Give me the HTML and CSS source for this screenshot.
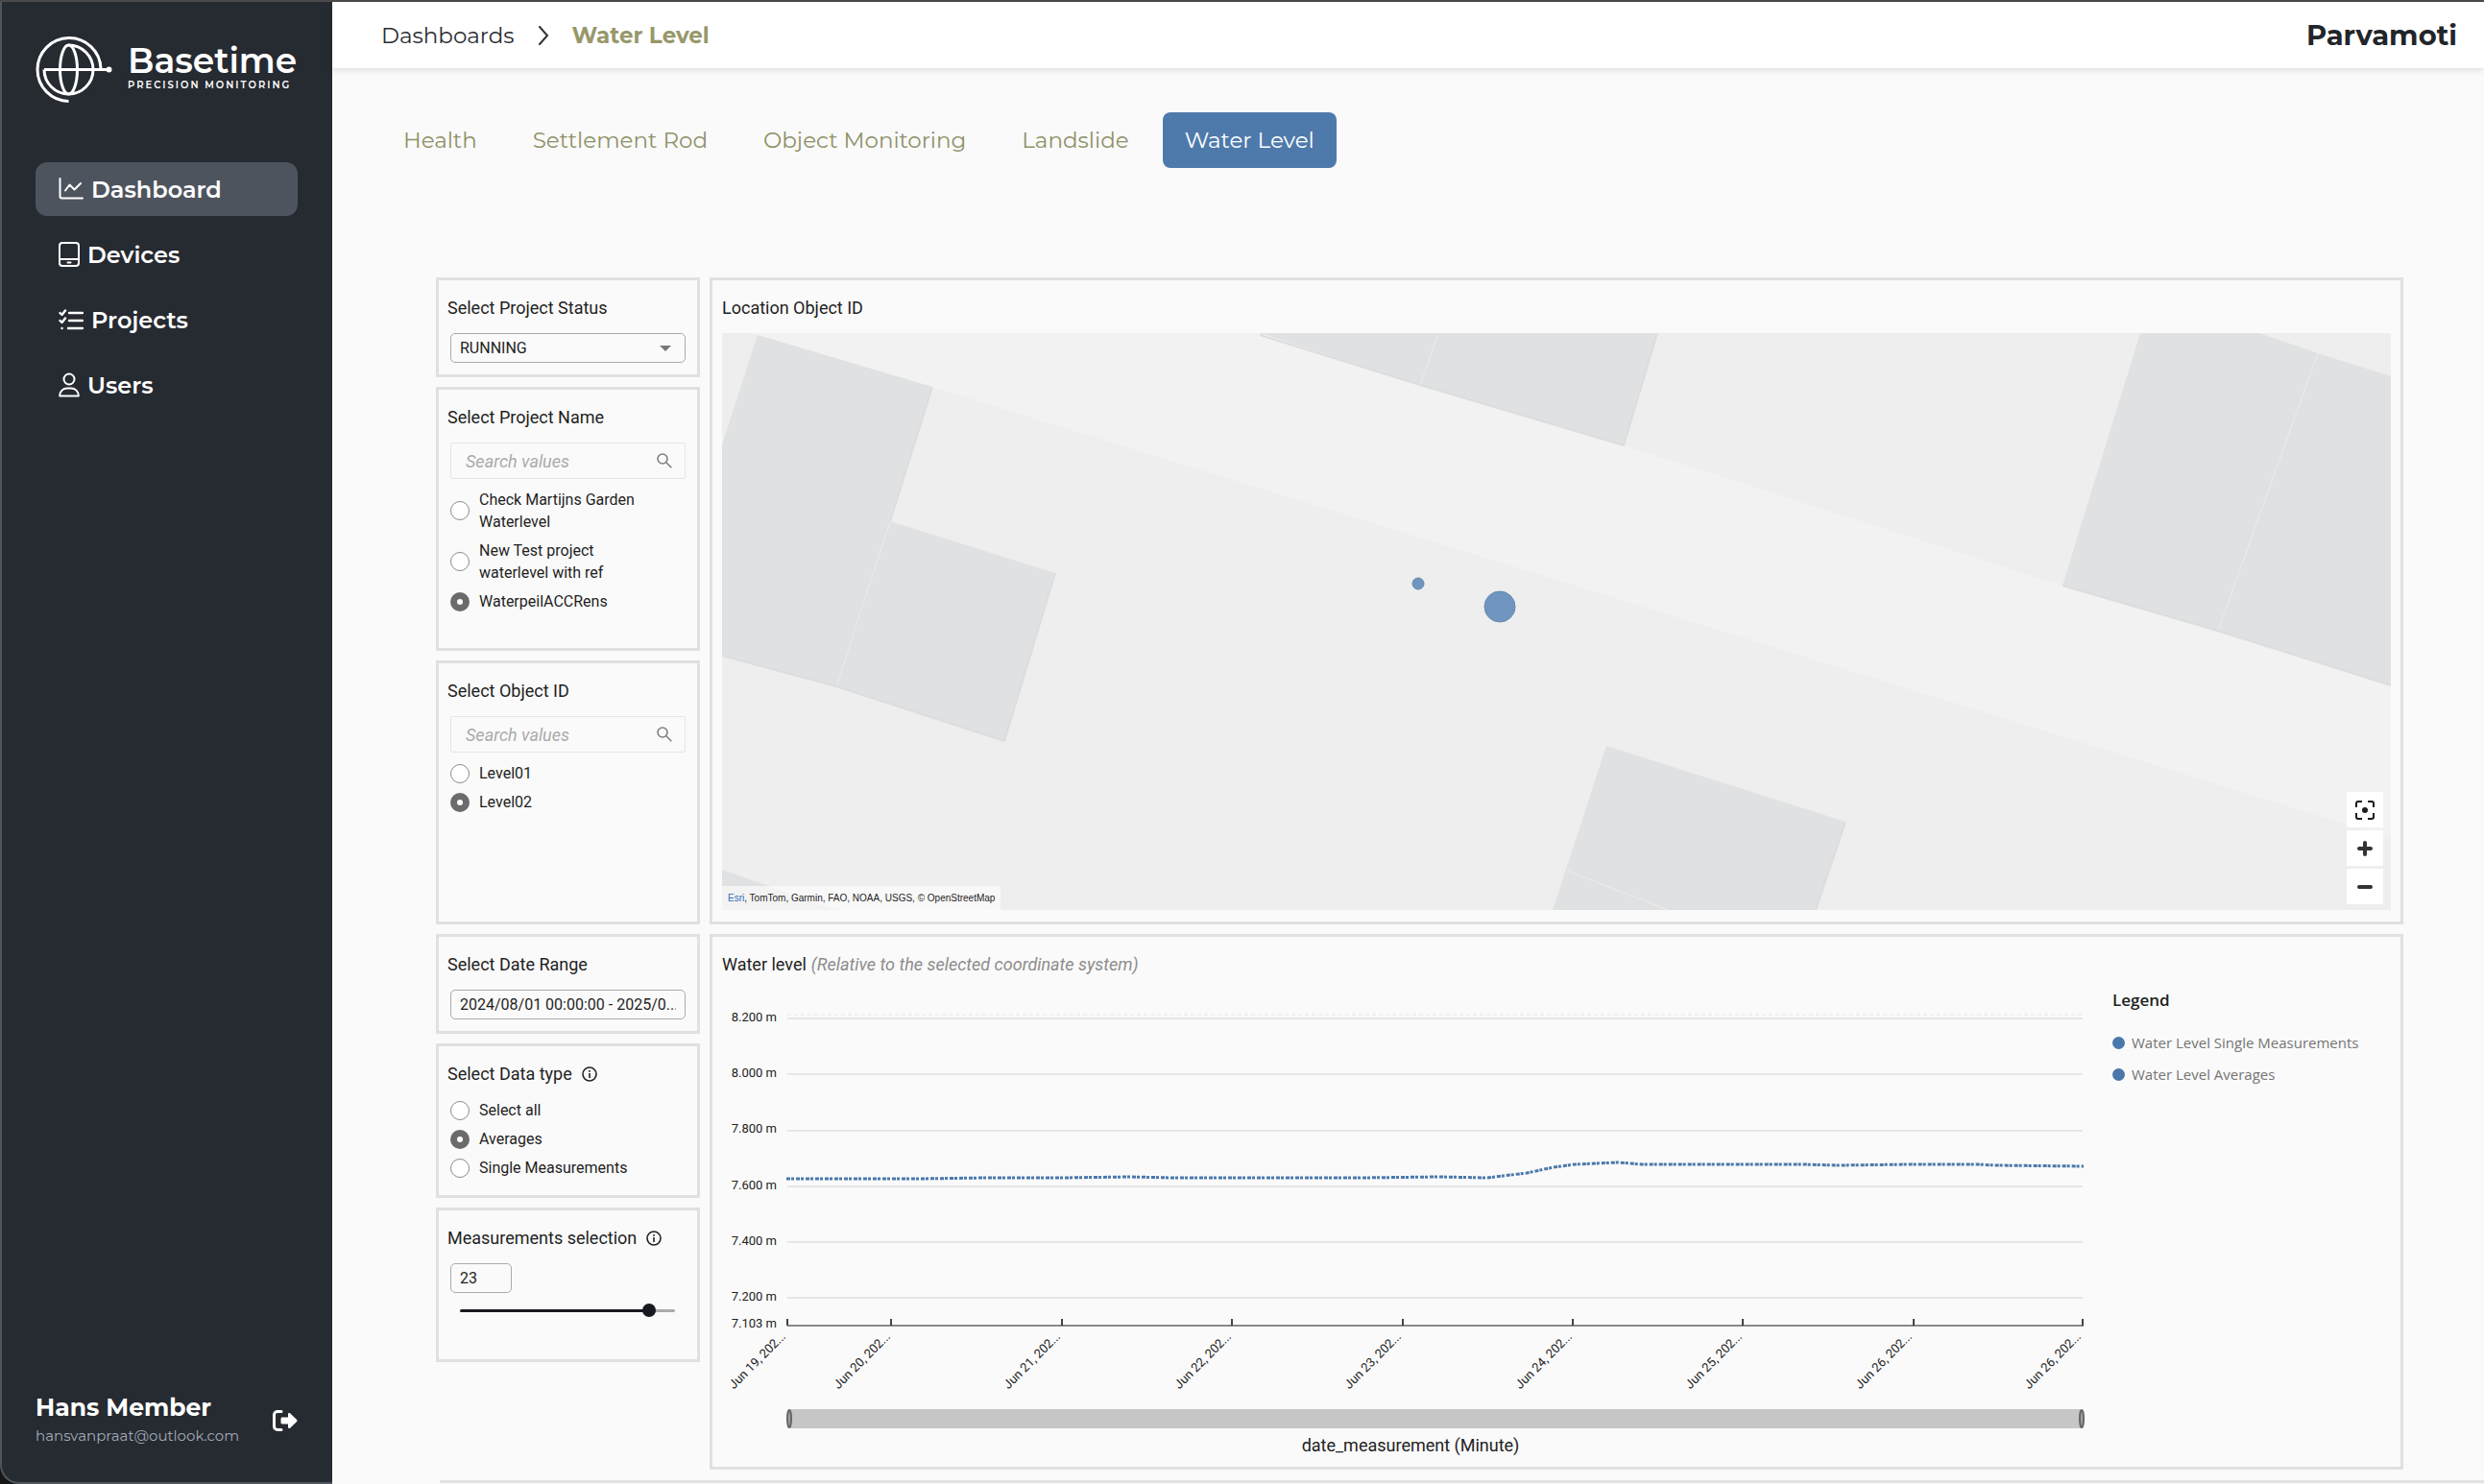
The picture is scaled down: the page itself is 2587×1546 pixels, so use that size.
FILE: index.html
```html
<!DOCTYPE html>
<html lang="en">

<head>
  <meta charset="UTF-8">
  <meta name="viewport" content="width=device-width, initial-scale=1">
  <title>Basetime - Water Level</title>
  <link rel="stylesheet" href="styles.css">
</head>

<body>
  <div class="app">
    <aside class="sidebar">
      <a class="brand" href="#">
        <svg class="brand-logo" viewBox="0 0 80 70" fill="none" stroke="#fff" stroke-width="3">
          <path d="M68 33.500A33 33 0 1 0 34.500 67.500" />
          <path d="M9 34.500H76" />
          <path d="M9 34.500A25.500 25.500 0 1 0 34.500 9" />
          <ellipse cx="34.500" cy="34.500" rx="9" ry="25.500" />
          <circle cx="76.500" cy="34.500" r="1.500" />
        </svg>
        <span class="brand-text">
          <span class="brand-name">Basetime</span>
          <span class="brand-sub">PRECISION MONITORING</span>
        </span>
      </a>

      <nav class="menu">
        <a class="menu-item active" href="#">
          <svg width="26" height="24" viewBox="0 0 26 24" fill="none" stroke="#fff" stroke-width="2" stroke-linecap="round" stroke-linejoin="round">
            <path d="M1.500 1v18.500a2 2 0 0 0 2 2H25" />
            <path d="M7 13.500l4.500-6 5 5L23 6" />
          </svg>
          Dashboard
        </a>
        <a class="menu-item" href="#">
          <svg width="22" height="26" viewBox="0 0 22 26" fill="none" stroke="#fff" stroke-width="2" stroke-linecap="round">
            <rect x="1" y="1" width="20" height="24" rx="3" />
            <path d="M1 18h20M9.500 21.500h3" />
          </svg>
          Devices
        </a>
        <a class="menu-item" href="#">
          <svg width="26" height="24" viewBox="0 0 26 24" fill="none" stroke="#fff" stroke-width="2.400" stroke-linecap="round" stroke-linejoin="round">
            <path d="M1.500 5l2 2 3.500-4.500M1.500 13l2 2 3.500-4.500" />
            <path d="M11 5h14M11 13h14M10 21h15M3.500 21h.1" />
          </svg>
          Projects
        </a>
        <a class="menu-item" href="#">
          <svg width="22" height="26" viewBox="0 0 22 26" fill="none" stroke="#fff" stroke-width="2" stroke-linejoin="round">
            <circle cx="11" cy="7" r="5.500" />
            <path d="M1.200 24.500c0-5 3.600-8 7.800-8h4c4.200 0 7.800 3 7.800 8z" />
          </svg>
          Users
        </a>
      </nav>

      <div class="account">
        <div>
          <div class="account-name">Hans Member</div>
          <div class="account-mail">hansvanpraat@outlook.com</div>
        </div>
        <button class="logout" type="button" aria-label="Log out">
          <svg width="26" height="22" viewBox="0 0 26 22">
            <path d="M9 1.500H5a3.500 3.500 0 0 0-3.500 3.500v12A3.500 3.500 0 0 0 5 20.500h4" fill="none" stroke="#fff" stroke-width="3" stroke-linecap="round" />
            <path d="M10 7.500h6V4.200c0-1.200 1.300-1.700 2.100-.9l7 6.800c.5.500.5 1.300 0 1.800l-7 6.800c-.8.800-2.100.3-2.100-.9v-3.300h-6c-.8 0-1.500-.6-1.500-1.500V9c0-.8.700-1.500 1.500-1.500z" fill="#fff" />
          </svg>
        </button>
      </div>
    </aside>

    <div class="page">
      <header class="topbar">
        <div class="crumbs">
          <a href="#">Dashboards</a>
          <svg width="12" height="20" viewBox="0 0 12 20" fill="none" stroke="#333" stroke-width="2" stroke-linecap="round">
            <path d="M2 1l8 9-8 9" />
          </svg>
          <span class="current">Water Level</span>
        </div>
        <div class="company">Parvamoti</div>
      </header>

      <main class="content">
        <nav class="tabs">
          <a class="tab" href="#">Health</a>
          <a class="tab" href="#">Settlement Rod</a>
          <a class="tab" href="#">Object Monitoring</a>
          <a class="tab" href="#">Landslide</a>
          <a class="tab active" href="#">Water Level</a>
        </nav>

        <div class="dashboard">
          <form class="filters">
            <section class="panel">
              <label class="panel-title" for="status">Select Project Status</label>
              <div class="select">
                <select class="field" id="status">
                  <option>RUNNING</option>
                </select>
              </div>
            </section>

            <section class="panel panel-list">
              <h2 class="panel-title">Select Project Name</h2>
              <div class="search">
                <input type="text" placeholder="Search values" aria-label="Search project name">
                <svg width="16" height="16" viewBox="0 0 16 16" fill="none" stroke="#808080" stroke-width="1.600">
                  <circle cx="6" cy="6" r="5" />
                  <path d="M9.800 9.800l5.500 5.500" />
                </svg>
              </div>
              <div class="options">
                <label class="option"><input type="radio" name="project"><span>Check Martijns Garden Waterlevel</span></label>
                <label class="option"><input type="radio" name="project"><span>New Test project waterlevel with ref</span></label>
                <label class="option"><input type="radio" name="project" checked><span>WaterpeilACCRens</span></label>
              </div>
            </section>

            <section class="panel panel-list">
              <h2 class="panel-title">Select Object ID</h2>
              <div class="search">
                <input type="text" placeholder="Search values" aria-label="Search object ID">
                <svg width="16" height="16" viewBox="0 0 16 16" fill="none" stroke="#808080" stroke-width="1.600">
                  <circle cx="6" cy="6" r="5" />
                  <path d="M9.800 9.800l5.500 5.500" />
                </svg>
              </div>
              <div class="options">
                <label class="option"><input type="radio" name="object"><span>Level01</span></label>
                <label class="option"><input type="radio" name="object" checked><span>Level02</span></label>
              </div>
            </section>

            <section class="panel">
              <label class="panel-title" for="range">Select Date Range</label>
              <input class="field" id="range" type="text" value="2024/08/01 00:00:00 - 2025/0...">
            </section>

            <section class="panel panel-small">
              <h2 class="panel-title">Select Data type
                <svg class="info" width="16" height="16" viewBox="0 0 16 16">
                  <circle cx="8" cy="8" r="7" fill="none" stroke="#222" stroke-width="1.600" />
                  <path d="M7.200 7h1.600v5H7.200zM7.200 4h1.600v1.700H7.200z" fill="#222" />
                </svg>
              </h2>
              <div class="options options-flush">
                <label class="option"><input type="radio" name="type"><span>Select all</span></label>
                <label class="option"><input type="radio" name="type" checked><span>Averages</span></label>
                <label class="option"><input type="radio" name="type"><span>Single Measurements</span></label>
              </div>
            </section>

            <section class="panel panel-small">
              <label class="panel-title" for="count">Measurements selection
                <svg class="info" width="16" height="16" viewBox="0 0 16 16">
                  <circle cx="8" cy="8" r="7" fill="none" stroke="#222" stroke-width="1.600" />
                  <path d="M7.200 7h1.600v5H7.200zM7.200 4h1.600v1.700H7.200z" fill="#222" />
                </svg>
              </label>
              <input class="field field-number" id="count" type="text" value="23">
              <input class="slider" type="range" min="4" max="25" value="23" aria-label="Measurements selection">
            </section>
          </form>

          <div class="visuals">
            <section class="panel panel-visual">
              <h2 class="panel-title">Location Object ID</h2>
              <div class="map">
                <svg class="map-canvas" viewBox="0 0 1738 601">
                  <rect width="1738" height="601" fill="#eeeeee" />
                  <path class="road" d="M30 0H560L939 117 1396 263 1738 367V526L888 263 219 56z" />
                  <g class="building">
                    <path d="M37 2L219 56 175 196 347 250 294 425 119 368 0 336V116z" />
                    <path d="M560 0H974L939 117 727 54z" />
                    <path d="M1477 0H1601L1662 21 1738 45V367L1558 310 1396 263z" />
                    <path d="M921 430L1170 509 1139 601H865z" />
                    <path d="M0 559L119 601H0z" />
                  </g>
                  <g class="wall">
                    <path d="M175 196L119 368" />
                    <path d="M746 0L727 54" />
                    <path d="M1662 21L1558 310" />
                    <path d="M880 560L985 601" />
                  </g>
                  <g class="shade">
                    <path d="M219 56L175 196M347 250L294 425 119 368 0 336" />
                    <path d="M560 2L727 54 939 117 974 0" />
                    <path d="M1396 263L1558 310 1738 367" />
                    <path d="M1170 509L1139 601" />
                  </g>
                  <g class="marker">
                    <circle cx="725" cy="261" r="6" />
                    <circle cx="810" cy="285" r="16" />
                  </g>
                </svg>
                <div class="map-credit"><a href="#">Esri</a>, TomTom, Garmin, FAO, NOAA, USGS, © OpenStreetMap</div>
                <div class="map-controls">
                  <button type="button" aria-label="Fit to data">
                    <svg width="20" height="20" viewBox="0 0 20 20" fill="none" stroke="#1b1b1b" stroke-width="2">
                      <path d="M1 7V3a2 2 0 0 1 2-2h4M13 1h4a2 2 0 0 1 2 2v4M19 13v4a2 2 0 0 1-2 2h-4M7 19H3a2 2 0 0 1-2-2v-4" />
                      <circle cx="10" cy="10" r="3" fill="#1b1b1b" stroke="none" />
                    </svg>
                  </button>
                  <button type="button" aria-label="Zoom in">
                    <svg width="16" height="16" viewBox="0 0 16 16" stroke="#333" stroke-width="4" stroke-linecap="round">
                      <path d="M8 2v12M2 8h12" />
                    </svg>
                  </button>
                  <button type="button" aria-label="Zoom out">
                    <svg width="16" height="16" viewBox="0 0 16 16" stroke="#333" stroke-width="4" stroke-linecap="round">
                      <path d="M2 8h12" />
                    </svg>
                  </button>
                </div>
              </div>
            </section>

            <section class="panel panel-visual">
              <h2 class="panel-title">Water level <em>(Relative to the selected coordinate system)</em></h2>
              <div class="chart">
                <svg class="chart-canvas" viewBox="0 0 1432 485">
                  <g class="grid">
                    <path class="limit" d="M68 26H1417" />
                    <path d="M68 30H1417M68 88H1417M68 147H1417M68 205H1417M68 263H1417M68 321H1417" />
                  </g>
                  <g class="labels-y">
                    <text x="57" y="33">8.200 m</text>
                    <text x="57" y="91">8.000 m</text>
                    <text x="57" y="149">7.800 m</text>
                    <text x="57" y="208">7.600 m</text>
                    <text x="57" y="266">7.400 m</text>
                    <text x="57" y="324">7.200 m</text>
                    <text x="57" y="352">7.103 m</text>
                  </g>
                  <path class="axis" d="M68 350H1418" />
                  <path class="ticks" d="M68 350v-7M176 350v-7M354 350v-7M531 350v-7M709 350v-7M886 350v-7M1063 350v-7M1241 350v-7M1417 350v-7" />
                  <g class="labels-x">
                    <text transform="translate(67 362) rotate(-45)">Jun 19, 202...</text>
                    <text transform="translate(176 362) rotate(-45)">Jun 20, 202...</text>
                    <text transform="translate(353 362) rotate(-45)">Jun 21, 202...</text>
                    <text transform="translate(531 362) rotate(-45)">Jun 22, 202...</text>
                    <text transform="translate(708 362) rotate(-45)">Jun 23, 202...</text>
                    <text transform="translate(886 362) rotate(-45)">Jun 24, 202...</text>
                    <text transform="translate(1063 362) rotate(-45)">Jun 25, 202...</text>
                    <text transform="translate(1240 362) rotate(-45)">Jun 26, 202...</text>
                    <text transform="translate(1416 362) rotate(-45)">Jun 26, 202...</text>
                  </g>
                  <polyline class="series" points="67,197 126,197 206,197 275,196 355,196 424,195 470,196 562,196 631,196 665,196 746,195 797,196 838,191 866,185 888,182 933,180 958,182 1018,182 1125,182 1163,183 1238,182 1308,182 1326,183 1418,184" />
                  <rect x="69" y="437" width="1348" height="20" fill="#c6c6c6" />
                  <g fill="#a5a5a5" stroke="#666" stroke-width="2">
                    <ellipse cx="70" cy="447" rx="2" ry="9" />
                    <ellipse cx="1416" cy="447" rx="2" ry="9" />
                  </g>
                  <text class="axis-title" x="717" y="481">date_measurement (Minute)</text>
                </svg>
                <div class="legend">
                  <h3>Legend</h3>
                  <ul>
                    <li>Water Level Single Measurements</li>
                    <li>Water Level Averages</li>
                  </ul>
                </div>
              </div>
            </section>
          </div>
        </div>
        <div class="next-row"></div>
      </main>
    </div>
  </div>
</body>

</html>
```
FILE: styles.css
```css
* {
  box-sizing: border-box;
}

body {
  margin: 0;
  font-family: 'Montserrat', 'Inter', sans-serif;
  background-color: #161616;
  color: #2b2d33;
}

a {
  color: inherit;
  text-decoration: none;
}

.app {
  display: flex;
  min-height: 100vh;
  border-top: 2px solid #4a4a4a;
}

/* sidebar */

.sidebar {
  display: flex;
  flex-direction: column;
  width: 346px;
  flex-shrink: 0;
  padding: 36px 36px 34px 35px;
  background-color: #262a31;
  border-left: 2px solid #4f545d;
  border-bottom: 2px solid #4f545d;
  border-bottom-left-radius: 20px;
  color: #fff;
}

.brand {
  display: flex;
  gap: 16px;
  height: 70px;
}

.brand-logo {
  width: 80px;
  height: 70px;
  flex-shrink: 0;
}

.brand-text {
  display: flex;
  flex-direction: column;
  padding-top: 5px;
  white-space: nowrap;
}

.brand-name {
  font-size: 36px;
  font-weight: 600;
  line-height: 40px;
}

.brand-sub {
  font-size: 10px;
  font-weight: 600;
  line-height: 12px;
  letter-spacing: 2px;
}

.menu {
  display: flex;
  flex-direction: column;
  gap: 12px;
  margin-top: 61px;
}

.menu-item {
  display: flex;
  align-items: center;
  gap: 8px;
  height: 56px;
  padding: 0 24px;
  border-radius: 12px;
  font-size: 24px;
  font-weight: 600;
}

.menu-item.active {
  background-color: #4e545e;
}

.account {
  display: flex;
  align-items: center;
  justify-content: space-between;
  margin-top: auto;
}

.account-name {
  font-size: 25px;
  font-weight: 700;
  line-height: 32px;
}

.account-mail {
  font-size: 15px;
  line-height: 28px;
  color: #a3abb8;
}

.logout {
  display: flex;
  padding: 0;
  border: 0;
  background: none;
}

/* page */

.page {
  flex: 1;
  min-width: 0;
  background-color: #fafafa;
}

.topbar {
  display: flex;
  align-items: center;
  justify-content: space-between;
  height: 69px;
  padding: 0 28px 0 51px;
  background-color: #fff;
  box-shadow: 0 2px 6px rgba(0, 0, 0, 0.12);
}

.crumbs {
  display: flex;
  align-items: center;
  gap: 24px;
  font-size: 23px;
}

.crumbs .current {
  font-weight: 700;
  color: #97986a;
}

.company {
  font-size: 29px;
  font-weight: 700;
  color: #22252b;
}

.content {
  padding-top: 46px;
}

.tabs {
  display: flex;
  gap: 12px;
  padding-left: 51px;
}

.tab {
  padding: 0 23px;
  border-radius: 8px;
  font-size: 23px;
  line-height: 58px;
  color: #8f9168;
}

.tab.active {
  background-color: #4e7aab;
  color: #fff;
}

/* dashboard */

.dashboard {
  display: grid;
  grid-template-columns: 275px 1fr;
  gap: 10px;
  margin-top: 114px;
  padding: 0 84px 0 108px;
  font-family: 'Roboto', sans-serif;
  color: #1f1f1f;
}

.filters,
.visuals {
  display: flex;
  flex-direction: column;
  gap: 10px;
  min-width: 0;
}

.panel {
  display: flex;
  flex-direction: column;
  padding: 17px 12px 12px;
  border: 3px solid #e0e0e0;
}

.panel-visual {
  padding: 17px 10px 12px;
}

.panel-list {
  min-height: 275px;
}

.panel-small {
  min-height: 161px;
}

.panel-title {
  display: flex;
  align-items: center;
  gap: 5px;
  margin: 0 0 14px;
  font-size: 18px;
  font-weight: 400;
  line-height: 24px;
  white-space: nowrap;
}

.filters .panel-title {
  margin-left: -3px;
}

.panel-title em {
  color: #8c8c8c;
}

.info {
  margin-left: 5px;
}

.field {
  width: 100%;
  height: 31px;
  padding: 0 9px;
  border: 1px solid #aaa;
  border-radius: 5px;
  background: transparent;
  font: 16px 'Roboto', sans-serif;
  color: #1f1f1f;
  appearance: none;
}

.field-number {
  width: 64px;
}

.select {
  position: relative;
}

.select::after {
  content: '';
  position: absolute;
  top: 13px;
  right: 15px;
  border: 6px solid transparent;
  border-top-color: #777;
  border-bottom: 0;
  pointer-events: none;
}

.search {
  display: flex;
  align-items: center;
  height: 38px;
  padding: 0 13px 0 15px;
  border: 1px solid #e6e6e6;
  border-radius: 2px;
}

.search input {
  flex: 1;
  min-width: 0;
  padding: 0;
  border: 0;
  background: transparent;
  font: 18px 'Roboto', sans-serif;
}

.search input::placeholder {
  font-style: italic;
  color: #aaa;
}

.options {
  display: flex;
  flex-direction: column;
  gap: 7px;
  margin-top: 10px;
}

.options-flush {
  margin-top: 0;
}

.option {
  display: flex;
  align-items: center;
  gap: 10px;
  padding-right: 40px;
  font-size: 16px;
  line-height: 23px;
}

.option input {
  width: 20px;
  height: 20px;
  margin: 0;
  flex-shrink: 0;
  border: 1px solid #8a8a8a;
  border-radius: 50%;
  background-color: #fff;
  appearance: none;
}

.option input:checked {
  border: 7px solid #6b6b6b;
}

.slider {
  width: 224px;
  height: 14px;
  margin: 11px 0 0 10px;
  background: transparent;
  appearance: none;
}

.slider::-webkit-slider-runnable-track {
  height: 3px;
  border-radius: 2px;
  background: linear-gradient(to right, #16191f 88%, #aaa 88%);
}

.slider::-webkit-slider-thumb {
  width: 14px;
  height: 14px;
  margin-top: -6px;
  border-radius: 50%;
  background-color: #16191f;
  appearance: none;
}

/* map */

.map {
  position: relative;
}

.map-canvas,
.chart-canvas {
  display: block;
  width: 100%;
}

.road {
  fill: #f2f2f2;
}

.building {
  fill: #e0e1e2;
}

.wall {
  stroke: #ececec;
  stroke-width: 1;
}

.shade {
  fill: none;
  stroke: #dcddde;
  stroke-width: 2;
}

.marker {
  fill: #7096bf;
  stroke: #6288b1;
  stroke-width: 1;
}

.map-credit {
  position: absolute;
  left: 0;
  bottom: 0;
  padding: 0 6px;
  background-color: rgba(255, 255, 255, 0.6);
  font: 10px/25px 'Liberation Sans', sans-serif;
}

.map-credit a {
  color: #2f6cb5;
}

.map-controls {
  position: absolute;
  right: 8px;
  bottom: 6px;
  display: flex;
  flex-direction: column;
  gap: 3px;
}

.map-controls button {
  display: flex;
  align-items: center;
  justify-content: center;
  width: 38px;
  height: 37px;
  padding: 0;
  border: 0;
  background-color: #fff;
}

/* chart */

.chart {
  display: grid;
  grid-template-columns: 1fr 290px;
  gap: 16px;
}

.chart text {
  font-family: 'Roboto', sans-serif;
  fill: #222;
}

.grid path {
  stroke: #e6e6e6;
  stroke-width: 2;
}

.grid .limit {
  stroke-width: 1;
  stroke-dasharray: 4 3;
}

.labels-y text,
.labels-x text {
  font-size: 13px;
  text-anchor: end;
}

.axis {
  stroke: #8a8a8a;
  stroke-width: 2;
}

.ticks {
  stroke: #444;
  stroke-width: 2;
}

.series {
  fill: none;
  stroke: #4a78ab;
  stroke-width: 3;
  stroke-dasharray: 4 1 3 2;
}

.chart .axis-title {
  font-size: 18px;
  text-anchor: middle;
}

.legend {
  font-family: 'Open Sans', sans-serif;
}

.legend h3 {
  margin: 0 0 21px;
  font-size: 17px;
  font-weight: 600;
  line-height: 22px;
}

.legend ul {
  display: flex;
  flex-direction: column;
  gap: 9px;
  margin: 0;
  padding: 0;
  list-style: none;
}

.legend li {
  display: flex;
  align-items: center;
  gap: 7px;
  font-size: 15px;
  line-height: 24px;
  color: #757575;
  white-space: nowrap;
}

.legend li::before {
  content: '';
  width: 13px;
  height: 13px;
  border-radius: 50%;
  background-color: #4a78ab;
}

.next-row {
  margin: 11px 0 0 112px;
  border-top: 3px solid #e2e2e2;
}
```
